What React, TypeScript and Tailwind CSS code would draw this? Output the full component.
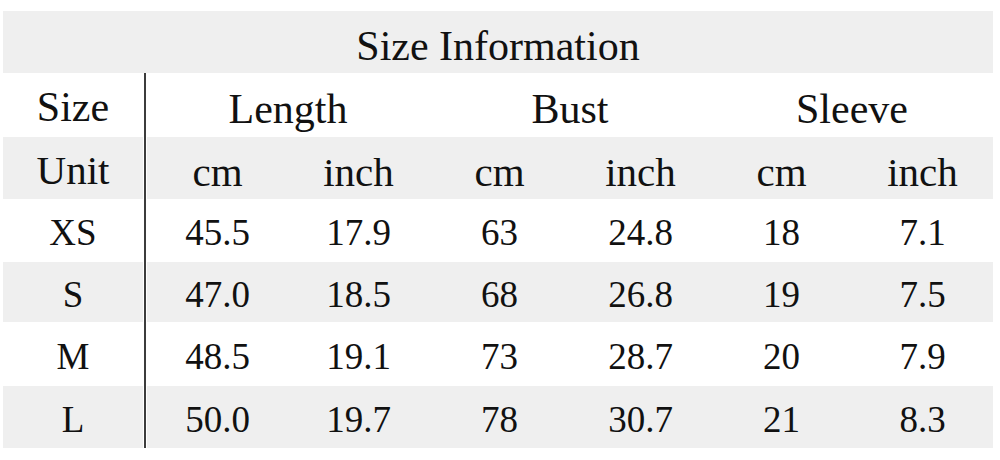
const rows = [
  { size: "XS", values: ["45.5", "17.9", "63", "24.8", "18", "7.1"], gray: false, h: "h-[63px]" },
  { size: "S", values: ["47.0", "18.5", "68", "26.8", "19", "7.5"], gray: true, h: "h-[60px]" },
  { size: "M", values: ["48.5", "19.1", "73", "28.7", "20", "7.9"], gray: false, h: "h-[64px]" },
  { size: "L", values: ["50.0", "19.7", "78", "30.7", "21", "8.3"], gray: true, h: "h-[62px]" },
];

const units = ["cm", "inch", "cm", "inch", "cm", "inch"];

function Row({ gray, h, first, children }: { gray: boolean; h: string; first: string; children: React.ReactNode }) {
  const bg = gray ? "bg-[#efefef]" : "bg-white";
  return (
    <div className={`flex ${h}`}>
      <div className={`flex w-[140px] items-center justify-center pt-[5px] ${bg}`}>{first}</div>
      {/* divider with thin white gaps either side */}
      <div className="w-px bg-white" />
      <div className="w-[2px] bg-[#3c3c3c]" />
      <div className="w-px bg-white" />
      <div className={`grid flex-1 items-center pt-[5px] ${bg}`}>{children}</div>
    </div>
  );
}

export default function App() {
  return (
    <div className="h-[460px] w-[1000px] bg-white pt-[11px] pl-[3px] font-['Liberation_Serif'] text-[#111]">
      <div className="w-[990px]">
        {/* Title */}
        <div className="flex h-[62px] items-center justify-center bg-[#efefef] pt-[8px] text-[42px]">
          Size Information
        </div>

        {/* Size / measurement names */}
        <div className="text-[42px]">
          <Row gray={false} h="h-[64px]" first="Size">
            <div className="grid grid-cols-3 text-center">
              <span>Length</span>
              <span>Bust</span>
              <span>Sleeve</span>
            </div>
          </Row>
        </div>

        {/* Units */}
        <div className="text-[41px]">
          <Row gray={true} h="h-[62px]" first="Unit">
            <div className="grid grid-cols-6 text-center">
              {units.map((u, i) => (
                <span key={i}>{u}</span>
              ))}
            </div>
          </Row>
        </div>

        {/* Data rows */}
        <div className="text-[37px]">
          {rows.map(r => (
            <Row key={r.size} gray={r.gray} h={r.h} first={r.size}>
              <div className="grid grid-cols-6 text-center">
                {r.values.map((v, i) => (
                  <span key={i}>{v}</span>
                ))}
              </div>
            </Row>
          ))}
        </div>
      </div>
    </div>
  );
}
